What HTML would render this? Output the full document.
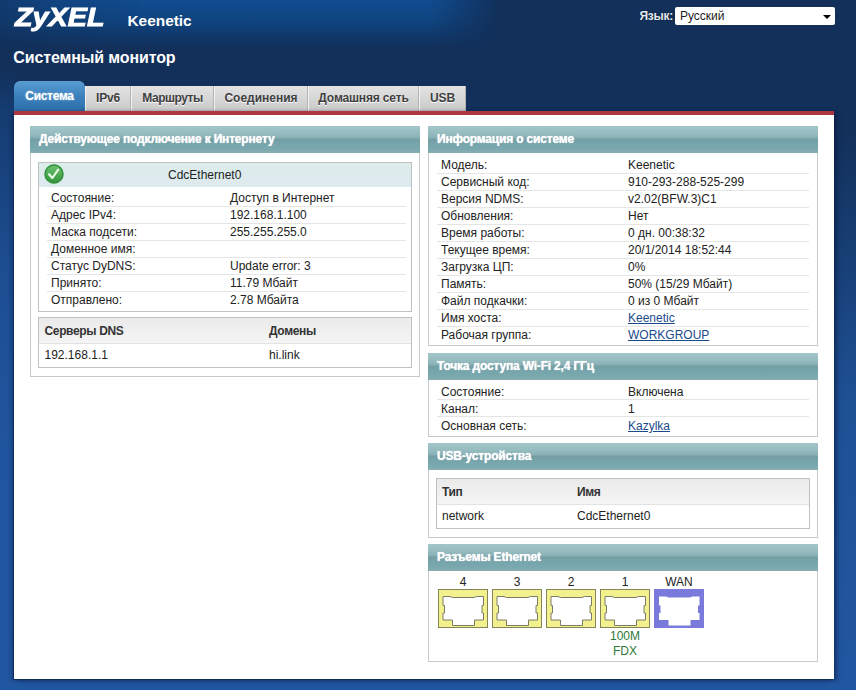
<!DOCTYPE html>
<html lang="ru">
<head>
<meta charset="utf-8">
<title>ZyXEL Keenetic</title>
<style>
*{box-sizing:border-box;margin:0;padding:0}
html,body{width:856px;height:690px;overflow:hidden}
body{position:relative;font-family:"Liberation Sans",sans-serif;font-size:12px;color:#222;
 background:
  linear-gradient(to bottom,#12305a 0,#12305a 130px,#1e5094 400px,#2157a1 690px);}
.abs{position:absolute}
#logo{left:15px;top:3px;font-size:25px;font-weight:bold;font-style:italic;color:#fff;letter-spacing:0;transform-origin:0 0;transform:scaleX(1.15);line-height:28px;-webkit-text-stroke:.9px #fff}
#model{left:127.5px;top:12px;font-size:15.4px;font-weight:bold;color:#fff;line-height:18px}
#title{left:13.3px;top:49px;font-size:16px;letter-spacing:-.13px;font-weight:bold;color:#fff;line-height:18px}
#lang{left:639.5px;top:9px;letter-spacing:-.3px;color:#e4eaf0;font-weight:bold;font-size:12px;line-height:14px;text-shadow:0 0 1px #000}
#sel{left:675px;top:7px;width:160px;height:18px;background:#fff;border-radius:2px;font-size:12px;line-height:18px;padding-left:5px;color:#222}
#sel:after{content:"";position:absolute;right:4px;top:8px;border:4px solid transparent;border-top:4px solid #000;border-bottom:0}
#panel{left:14px;top:111px;width:820px;height:568px;background:#fff;border-top:4px solid #ae363e;box-shadow:-1px 1px 0 #0f2d5c,-3px 2px 4px rgba(10,25,70,.3),3px 1px 4px rgba(10,20,60,.5)}
.tab{position:absolute;top:86px;height:25px;line-height:24px;font-weight:bold;font-size:12px;color:#404040;letter-spacing:-.15px;text-align:center;
 background:linear-gradient(#e3e3e3,#d6d6d6 50%,#cbcbcb);border-right:1px solid #b4b4b4;border-left:1px solid #f2f2f2;text-shadow:0 1px 0 #fff}
.tab.act{letter-spacing:-.3px;top:81px;height:31px;line-height:31px;color:#fff;background:linear-gradient(#5b9dd2,#3a80bd 50%,#2c6ea8);border:0;border-radius:6px 6px 0 0;text-shadow:0 0 2px #acd}
.box{position:absolute;border:1px solid #c6caca;background:#fff}
.hd{position:absolute;left:-1px;top:-1px;right:-1px;height:27px;line-height:27px;padding-left:9px;color:#fff;font-weight:bold;font-size:12px;letter-spacing:-.18px;
 background:linear-gradient(#a3c5c9 0,#97bdc1 25%,#89b1b6 42%,#739ea4 50%,#75a3a9 60%,#79a9af 86%,#8aadb1 100%);text-shadow:0 0 1px #fff}
.row{position:absolute;left:0;right:0;height:17px;line-height:17px;white-space:nowrap}
.row span{position:absolute;top:0}
.sep{position:absolute;height:1px;background:#e5e5e5;margin-top:-1px}
a{color:#1b4a8a;text-decoration:underline}
.inner{position:absolute;border:1px solid #bdc1c1;background:#fff}
.th{position:absolute;left:0;right:0;top:0;height:26px;line-height:26px;font-weight:bold;letter-spacing:-.35px;color:#333;background:linear-gradient(#eaeaea,#f5f5f5);border-bottom:1px solid #e2e2e2}
.port{position:absolute;top:589px;width:50px;height:39px}
.plabel{position:absolute;top:575px;width:50px;text-align:center;line-height:14px}
</style>
</head>
<body>
<div class="abs" style="left:0;top:70px;width:14px;height:620px;background:linear-gradient(to bottom,#12305a 0,#153c70 40px,#1d4e92 200px,#2056a0 400px,#2157a1 100%)"></div>
<div class="abs" style="left:0;top:0;width:500px;height:50px;background:linear-gradient(to bottom,#114c90 0,#0f4682 38%,#10396c 70%,#12305a 96%);-webkit-mask-image:linear-gradient(to right,rgba(0,0,0,.4) 0,rgba(0,0,0,.75) 12%,#000 30%,#000 86%,transparent 100%);mask-image:linear-gradient(to right,rgba(0,0,0,.4) 0,rgba(0,0,0,.75) 12%,#000 30%,#000 86%,transparent 100%)"></div>
<div id="logo" class="abs">ZyXEL</div>
<div id="model" class="abs">Keenetic</div>
<div id="title" class="abs">Системный монитор</div>
<div id="lang" class="abs">Язык:</div>
<div id="sel" class="abs">Русский</div>

<div class="tab act" style="left:14px;width:71px">Система</div>
<div class="tab" style="left:85px;width:46px">IPv6</div>
<div class="tab" style="left:131px;width:83px;letter-spacing:-.5px">Маршруты</div>
<div class="tab" style="left:214px;width:94px;letter-spacing:0">Соединения</div>
<div class="tab" style="left:308px;width:111px">Домашняя сеть</div>
<div class="tab" style="left:419px;width:47px">USB</div>
<div id="panel" class="abs"></div>

<!-- left box -->
<div class="box" style="left:30px;top:126px;width:390px;height:251px">
 <div class="hd">Действующее подключение к Интернету</div>
</div>
<div class="inner" style="left:38px;top:162px;width:374px;height:150px">
 <div class="abs" style="left:0;top:0;right:0;height:24px;background:linear-gradient(#dcedea,#dee9ef);line-height:24px"><span class="abs" style="left:129px">CdcEthernet0</span></div>
 <svg class="abs" style="left:4px;top:0px" width="22" height="22" viewBox="-1 -1 22 22"><defs><linearGradient id="gk" x1="0" y1="0" x2="0" y2="1"><stop offset="0" stop-color="#6cc070"/><stop offset="1" stop-color="#33973a"/></linearGradient></defs><circle cx="10" cy="10" r="10.3" fill="#bfe8c4" opacity=".7"/><circle cx="10" cy="10" r="9" fill="url(#gk)" stroke="#2f8c3c" stroke-width="1.4"/><path d="M5 10.2 L8.4 14 L14.2 5.6" fill="none" stroke="#eafbea" stroke-width="2.1" stroke-linecap="round" stroke-linejoin="round"/></svg>
 <div class="row" style="top:27px"><span style="left:12px">Состояние:</span><span style="left:191px">Доступ в Интернет</span></div>
 <div class="row" style="top:44px"><span style="left:12px">Адрес IPv4:</span><span style="left:191px">192.168.1.100</span></div>
 <div class="row" style="top:61px"><span style="left:12px">Маска подсети:</span><span style="left:191px">255.255.255.0</span></div>
 <div class="row" style="top:78px"><span style="left:12px">Доменное имя:</span></div>
 <div class="row" style="top:95px"><span style="left:12px">Статус DyDNS:</span><span style="left:191px">Update error: 3</span></div>
 <div class="row" style="top:112px"><span style="left:12px">Принято:</span><span style="left:191px">11.79 Мбайт</span></div>
 <div class="row" style="top:129px"><span style="left:12px">Отправлено:</span><span style="left:191px">2.78 Мбайта</span></div>
 <div class="sep" style="left:8px;right:5px;top:44px"></div>
 <div class="sep" style="left:8px;right:5px;top:61px"></div>
 <div class="sep" style="left:8px;right:5px;top:78px"></div>
 <div class="sep" style="left:8px;right:5px;top:95px"></div>
 <div class="sep" style="left:8px;right:5px;top:112px"></div>
 <div class="sep" style="left:8px;right:5px;top:129px"></div>
</div>
<div class="inner" style="left:38px;top:317px;width:374px;height:51px">
 <div class="th"><span class="abs" style="left:5.5px">Серверы DNS</span><span class="abs" style="left:230px">Домены</span></div>
 <div class="row" style="top:29px"><span style="left:5.5px">192.168.1.1</span><span style="left:230px">hi.link</span></div>
</div>

<!-- right box 1 -->
<div class="box" style="left:428px;top:126px;width:390px;height:220px">
 <div class="hd">Информация о системе</div>
 <div class="row" style="top:30px"><span style="left:12px">Модель:</span><span style="left:199px">Keenetic</span></div>
 <div class="row" style="top:47px"><span style="left:12px">Сервисный код:</span><span style="left:199px">910-293-288-525-299</span></div>
 <div class="row" style="top:64px"><span style="left:12px">Версия NDMS:</span><span style="left:199px">v2.02(BFW.3)C1</span></div>
 <div class="row" style="top:81px"><span style="left:12px">Обновления:</span><span style="left:199px">Нет</span></div>
 <div class="row" style="top:98px"><span style="left:12px">Время работы:</span><span style="left:199px">0 дн. 00:38:32</span></div>
 <div class="row" style="top:115px"><span style="left:12px">Текущее время:</span><span style="left:199px">20/1/2014 18:52:44</span></div>
 <div class="row" style="top:132px"><span style="left:12px">Загрузка ЦП:</span><span style="left:199px">0%</span></div>
 <div class="row" style="top:149px"><span style="left:12px">Память:</span><span style="left:199px">50% (15/29 Мбайт)</span></div>
 <div class="row" style="top:166px"><span style="left:12px">Файл подкачки:</span><span style="left:199px">0 из 0 Мбайт</span></div>
 <div class="row" style="top:183px"><span style="left:12px">Имя хоста:</span><span style="left:199px"><a>Keenetic</a></span></div>
 <div class="row" style="top:200px"><span style="left:12px">Рабочая группа:</span><span style="left:199px"><a>WORKGROUP</a></span></div>
 <div class="sep" style="left:8px;right:8px;top:47px"></div>
 <div class="sep" style="left:8px;right:8px;top:64px"></div>
 <div class="sep" style="left:8px;right:8px;top:81px"></div>
 <div class="sep" style="left:8px;right:8px;top:98px"></div>
 <div class="sep" style="left:8px;right:8px;top:115px"></div>
 <div class="sep" style="left:8px;right:8px;top:132px"></div>
 <div class="sep" style="left:8px;right:8px;top:149px"></div>
 <div class="sep" style="left:8px;right:8px;top:166px"></div>
 <div class="sep" style="left:8px;right:8px;top:183px"></div>
 <div class="sep" style="left:8px;right:8px;top:200px"></div>
</div>

<!-- right box 2 -->
<div class="box" style="left:428px;top:353px;width:390px;height:84px">
 <div class="hd">Точка доступа Wi-Fi 2,4 ГГц</div>
 <div class="row" style="top:30px"><span style="left:12px">Состояние:</span><span style="left:199px">Включена</span></div>
 <div class="row" style="top:47px"><span style="left:12px">Канал:</span><span style="left:199px">1</span></div>
 <div class="row" style="top:64px"><span style="left:12px">Основная сеть:</span><span style="left:199px"><a>Kazylka</a></span></div>
 <div class="sep" style="left:8px;right:8px;top:46px"></div>
 <div class="sep" style="left:8px;right:8px;top:63px"></div>
</div>

<!-- right box 3 -->
<div class="box" style="left:428px;top:443px;width:390px;height:95px">
 <div class="hd">USB-устройства</div>
</div>
<div class="inner" style="left:436px;top:478px;width:374px;height:51px">
 <div class="th"><span class="abs" style="left:5px">Тип</span><span class="abs" style="left:140px">Имя</span></div>
 <div class="row" style="top:29px"><span style="left:5px">network</span><span style="left:140px">CdcEthernet0</span></div>
</div>

<!-- right box 4 -->
<div class="box" style="left:428px;top:544px;width:390px;height:118px">
 <div class="hd">Разъемы Ethernet</div>
</div>
<div class="plabel" style="left:438px">4</div>
<div class="plabel" style="left:492px">3</div>
<div class="plabel" style="left:546px">2</div>
<div class="plabel" style="left:600px">1</div>
<div class="plabel" style="left:654px">WAN</div>
<svg class="port" style="left:438px" viewBox="0 0 50 39"><rect x=".5" y=".5" width="49" height="38" fill="#f3f08e" stroke="#85855a"/><path d="M5 7.5 H12 L14.5 8.5 H36 L38.5 7.5 H45.5 V16.5 H44 V24 H45.5 V31 H36.5 V36.5 H14.5 V31 H5 V24 H6.5 V16.5 H5 Z" fill="#fff" stroke="#7c7c66"/></svg>
<svg class="port" style="left:492px" viewBox="0 0 50 39"><rect x=".5" y=".5" width="49" height="38" fill="#f3f08e" stroke="#85855a"/><path d="M5 7.5 H12 L14.5 8.5 H36 L38.5 7.5 H45.5 V16.5 H44 V24 H45.5 V31 H36.5 V36.5 H14.5 V31 H5 V24 H6.5 V16.5 H5 Z" fill="#fff" stroke="#7c7c66"/></svg>
<svg class="port" style="left:546px" viewBox="0 0 50 39"><rect x=".5" y=".5" width="49" height="38" fill="#f3f08e" stroke="#85855a"/><path d="M5 7.5 H12 L14.5 8.5 H36 L38.5 7.5 H45.5 V16.5 H44 V24 H45.5 V31 H36.5 V36.5 H14.5 V31 H5 V24 H6.5 V16.5 H5 Z" fill="#fff" stroke="#7c7c66"/></svg>
<svg class="port" style="left:600px" viewBox="0 0 50 39"><rect x=".5" y=".5" width="49" height="38" fill="#f3f08e" stroke="#85855a"/><path d="M5 7.5 H12 L14.5 8.5 H36 L38.5 7.5 H45.5 V16.5 H44 V24 H45.5 V31 H36.5 V36.5 H14.5 V31 H5 V24 H6.5 V16.5 H5 Z" fill="#fff" stroke="#7c7c66"/></svg>
<svg class="port" style="left:654px" viewBox="0 0 50 39"><rect x="0" y="0" width="50" height="39" fill="#7a7adc"/><path d="M5 7.5 H12 L14.5 8.5 H36 L38.5 7.5 H45.5 V16.5 H44 V24 H45.5 V31 H36.5 V36.5 H14.5 V31 H5 V24 H6.5 V16.5 H5 Z" fill="#fff" stroke="none"/></svg>
<div class="plabel" style="left:600px;top:629px;color:#2d7a3a">100M</div>
<div class="plabel" style="left:600px;top:644px;color:#2d7a3a">FDX</div>
</body>
</html>
